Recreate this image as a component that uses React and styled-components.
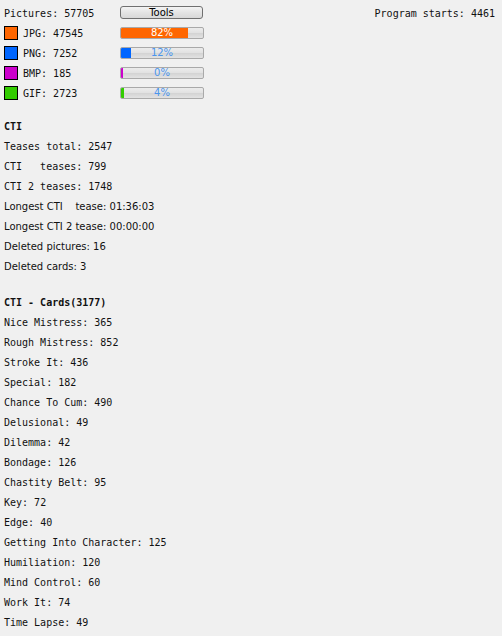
import React from "react";
import styled, { createGlobalStyle } from "styled-components";

const GlobalStyle = createGlobalStyle`
  html, body {
    margin: 0;
    background: #f0f0f0;
  }
`;

const mono = `"DejaVu Sans Mono", "Liberation Mono", monospace`;
const sans = `"DejaVu Sans", "Liberation Sans", sans-serif`;

const Page = styled.div`
  padding: 3px 7px 0 4px;
  color: #111;
  font-family: ${mono};
  font-size: 10px;
`;

const Summary = styled.div`
  display: grid;
  grid-template-columns: 116px 84px 1fr;
  grid-auto-rows: 20px;
  align-items: center;
`;

const Label = styled.span`
  white-space: pre;
`;

const Starts = styled.span`
  text-align: right;
  white-space: pre;
`;

const ToolsButton = styled.button`
  width: 83px;
  height: 13px;
  margin-top: -2px;
  padding: 0;
  border: 1px solid #707070;
  border-radius: 3px;
  background: linear-gradient(#f4f4f4, #e4e4e4 50%, #d8d8d8);
  font-family: ${sans};
  font-size: 10px;
  line-height: 11px;
  color: #000;
`;

const TypeCell = styled.div`
  display: flex;
  align-items: center;
  gap: 5px;
`;

const Swatch = styled.span`
  width: 12px;
  height: 12px;
  border: 1px solid #000;
  background: ${(p) => p.$color};
`;

const Bar = styled.div`
  position: relative;
  width: 82px;
  height: 10px;
  border: 1px solid #a9a9a9;
  border-radius: 2px;
  background: linear-gradient(#ececec, #e2e2e2 45%, #d4d4d4 55%, #e2e2e2);
  overflow: hidden;
`;

const Fill = styled.div`
  height: 100%;
  min-width: 2px;
  background: ${(p) => p.$color};
`;

const BarText = styled.span`
  position: absolute;
  inset: 0;
  text-align: center;
  font-family: ${sans};
  font-size: 10px;
  line-height: 10px;
  color: ${(p) => (p.$inverted ? "#fff" : "#4a95ee")};
`;

const Section = styled.div`
  margin-top: ${(p) => p.$gap}px;
`;

const Line = styled.div`
  height: 20px;
  line-height: 20px;
  white-space: pre;
  font-family: ${(p) => (p.$sans ? sans : mono)};
  font-weight: ${(p) => (p.$bold ? 700 : 400)};
`;

const types = [
  { name: "JPG", count: 47545, pct: 82, color: "#ff6600" },
  { name: "PNG", count: 7252, pct: 12, color: "#0066ff" },
  { name: "BMP", count: 185, pct: 0, color: "#cc00cc" },
  { name: "GIF", count: 2723, pct: 4, color: "#33cc00" },
];

const cards = [
  ["Nice Mistress", 365],
  ["Rough Mistress", 852],
  ["Stroke It", 436],
  ["Special", 182],
  ["Chance To Cum", 490],
  ["Delusional", 49],
  ["Dilemma", 42],
  ["Bondage", 126],
  ["Chastity Belt", 95],
  ["Key", 72],
  ["Edge", 40],
  ["Getting Into Character", 125],
  ["Humiliation", 120],
  ["Mind Control", 60],
  ["Work It", 74],
  ["Time Lapse", 49],
];

export default function App() {
  return (
    <>
      <GlobalStyle />
      <Page>
        <Summary>
          <Label>Pictures: 57705</Label>
          <ToolsButton>Tools</ToolsButton>
          <Starts>Program starts: 4461</Starts>
          {types.map((t) => (
            <React.Fragment key={t.name}>
              <TypeCell>
                <Swatch $color={t.color} />
                <Label>
                  {t.name}: {t.count}
                </Label>
              </TypeCell>
              <Bar>
                <Fill $color={t.color} style={{ width: `${t.pct}%` }} />
                <BarText $inverted={t.pct > 50}>{t.pct}%</BarText>
              </Bar>
              <span />
            </React.Fragment>
          ))}
        </Summary>

        <Section $gap={14}>
          <Line $bold>CTI</Line>
          <Line>Teases total: 2547</Line>
          <Line>CTI   teases: 799</Line>
          <Line>CTI 2 teases: 1748</Line>
          <Line $sans>Longest CTI    tease: 01:36:03</Line>
          <Line $sans>Longest CTI 2 tease: 00:00:00</Line>
          <Line $sans>Deleted pictures: 16</Line>
          <Line $sans>Deleted cards: 3</Line>
        </Section>

        <Section $gap={16}>
          <Line $bold>CTI - Cards(3177)</Line>
          {cards.map(([name, n]) => (
            <Line key={name}>
              {name}: {n}
            </Line>
          ))}
        </Section>
      </Page>
    </>
  );
}
